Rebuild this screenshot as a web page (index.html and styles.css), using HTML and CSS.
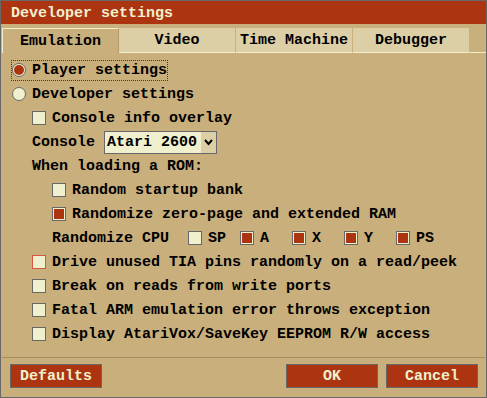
FILE: index.html
```html
<!DOCTYPE html>
<html lang="en">
<head>
    <meta charset="UTF-8">
    <title>Developer settings</title>
    <link rel="stylesheet" href="styles.css">
</head>
<body>
    <div class="dialog">
        <div class="titlebar">Developer settings</div>

        <div class="tabs">
            <div class="tab active">Emulation</div>
            <div class="tab">Video</div>
            <div class="tab">Time Machine</div>
            <div class="tab">Debugger</div>
            <div class="tab-fill"></div>
        </div>

        <div class="panel">
            <div class="row">
                <label class="radio focus"><span class="circle on"></span>Player settings</label>
            </div>
            <div class="row">
                <label class="radio"><span class="circle"></span>Developer settings</label>
            </div>
            <div class="row lvl1">
                <span class="box"></span>Console info overlay
            </div>
            <div class="row lvl1 no-gap">
                Console
                <div class="select">
                    <span class="select-text">Atari 2600</span>
                    <span class="select-arrow">
                        <svg width="9" height="7" viewBox="0 0 9 7"><polyline points="1,1 4.5,5 8,1" fill="none" stroke="#000" stroke-width="2"/></svg>
                    </span>
                </div>
            </div>
            <div class="row lvl1">When loading a ROM:</div>
            <div class="row lvl2">
                <span class="box"></span>Random startup bank
            </div>
            <div class="row lvl2">
                <span class="box checked"></span>Randomize zero-page and extended RAM
            </div>
            <div class="row lvl2 no-gap">
                <span class="cpu-label">Randomize CPU</span>
                <span class="cpu-item"><span class="box"></span>SP</span>
                <span class="cpu-item"><span class="box checked"></span>A</span>
                <span class="cpu-item"><span class="box checked"></span>X</span>
                <span class="cpu-item"><span class="box checked"></span>Y</span>
                <span class="cpu-item"><span class="box checked"></span>PS</span>
            </div>
            <div class="row lvl1">
                <span class="box framed"></span>Drive unused TIA pins randomly on a read/peek
            </div>
            <div class="row lvl1">
                <span class="box"></span>Break on reads from write ports
            </div>
            <div class="row lvl1">
                <span class="box"></span>Fatal ARM emulation error throws exception
            </div>
            <div class="row lvl1">
                <span class="box"></span>Display AtariVox/SaveKey EEPROM R/W access
            </div>
        </div>

        <div class="separator"></div>

        <div class="buttons">
            <button class="btn">Defaults</button>
            <div class="spacer"></div>
            <button class="btn">OK</button>
            <button class="btn">Cancel</button>
        </div>
    </div>
</body>
</html>
```

FILE: styles.css
```css
* {
    margin: 0;
    padding: 0;
    box-sizing: border-box;
}
body {
    background-color: #c9af7c;
    font-family: 'Liberation Mono', 'DejaVu Sans Mono', monospace;
    font-size: 15px;
    font-weight: bold;
    color: #000;
}
.dialog {
    width: 487px;
    height: 398px;
    border: 1px solid #686868;
    background-color: #c9af7c;
    display: flex;
    flex-direction: column;
}
.titlebar {
    height: 23px;
    line-height: 23px;
    padding: 1px 0 0 10px;
    background-color: #ac3410;
    color: #f0f0cf;
}

/* tabs */
.tabs {
    display: flex;
    margin-top: 4px;
    padding-left: 1px;
    height: 25px;
}
.tab {
    width: 117px;
    height: 25px;
    line-height: 24px;
    padding-top: 1px;
    text-align: center;
    background-color: #dccfa5;
    border-bottom: 1px solid #f0f0cf;
    border-right: 1px solid #c9af7c;
}
.tab.active {
    background-color: #c9af7c;
    border-top: 1px solid #f0f0cf;
    border-left: 1px solid #f0f0cf;
    border-right: 1px solid #b59a68;
    border-bottom: none;
    line-height: 23px;
}
.tab-fill {
    flex: 1;
    border-bottom: 1px solid #f0f0cf;
}

/* panel rows */
.panel {
    margin-top: 5px;
}
.row {
    height: 24px;
    display: flex;
    align-items: center;
    gap: 6px;
    padding-left: 10px;
}
.row.no-gap {
    gap: 0;
}
.row.lvl1 {
    padding-left: 31px;
}
.row.lvl2 {
    padding-left: 51px;
}
.radio {
    display: flex;
    align-items: center;
    gap: 6px;
    height: 21px;
    border: 1px dotted transparent;
}
.radio.focus {
    border-color: #c80000;
}
.circle {
    width: 14px;
    height: 14px;
    border-radius: 50%;
    border: 1px solid #686868;
    background-color: #f0f0cf;
    padding: 1px;
}
.circle.on::after {
    content: "";
    display: block;
    width: 10px;
    height: 10px;
    border-radius: 50%;
    background-color: #ac3410;
}
.box {
    width: 14px;
    height: 14px;
    border: 1px solid #686868;
    background-color: #f0f0cf;
    padding: 1px;
    flex-shrink: 0;
}
.box.checked::after {
    content: "";
    display: block;
    width: 10px;
    height: 10px;
    background-color: #ac3410;
}
.box.framed {
    border-color: #d55941;
}

/* console select */
.select {
    margin-left: 9px;
    width: 113px;
    height: 23px;
    border: 1px solid #686868;
    background-color: #f0f0cf;
    display: flex;
    align-items: center;
}
.select-text {
    flex: 1;
    padding-left: 2px;
}
.select-arrow {
    width: 15px;
    height: 21px;
    background-color: #dccfa5;
    display: flex;
    align-items: center;
    justify-content: center;
}

/* randomize cpu */
.cpu-label {
    margin-right: 19px;
}
.cpu-item {
    width: 52px;
    display: flex;
    align-items: center;
    gap: 6px;
}

/* footer */
.separator {
    margin: 11px 1px 0 1px;
    height: 1px;
    background-color: #a38c61;
}
.buttons {
    display: flex;
    gap: 8px;
    margin-top: 6px;
    padding: 0 8px 0 9px;
}
.spacer {
    flex: 1;
}
.btn {
    width: 92px;
    height: 24px;
    border: 1px solid #686868;
    background-color: #ac3410;
    color: #f0f0cf;
    font-family: inherit;
    font-size: 15px;
    font-weight: bold;
}
```
